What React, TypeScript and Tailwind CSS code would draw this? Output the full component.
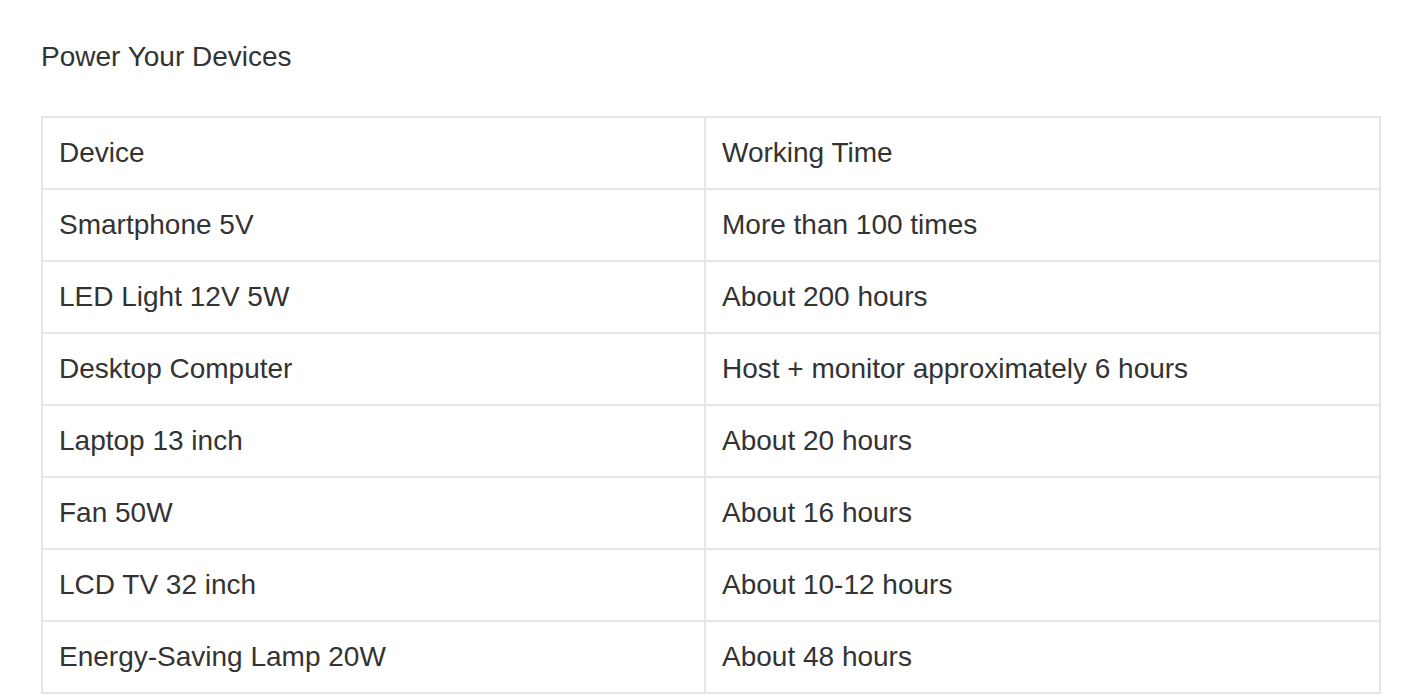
const rows: [string, string][] = [
  ["Device", "Working Time"],
  ["Smartphone 5V", "More than 100 times"],
  ["LED Light 12V 5W", "About 200 hours"],
  ["Desktop Computer", "Host + monitor approximately 6 hours"],
  ["Laptop 13 inch", "About 20 hours"],
  ["Fan 50W", "About 16 hours"],
  ["LCD TV 32 inch", "About 10-12 hours"],
  ["Energy-Saving Lamp 20W", "About 48 hours"],
];

export default function App() {
  return (
    <div
      className="min-h-[700px] bg-white pl-[41px] text-[#333333]"
      style={{ fontFamily: '"Liberation Sans", Arial, sans-serif' }}
    >
      <h2 className="pt-[37px] text-[28px] leading-[40px] font-normal">
        Power Your Devices
      </h2>

      {/* Device table */}
      <div className="mt-[39px] w-[1340px] border-2 border-[#e5e5e5]">
        {rows.map(([device, time], i) => (
          <div
            key={device}
            className={`grid grid-cols-[661px_1fr] ${i > 0 ? "border-t-2 border-[#e5e5e5]" : ""}`}
          >
            <div className="flex h-[70px] items-center px-4 text-[28px]">
              {device}
            </div>
            <div className="flex h-[70px] items-center border-l-2 border-[#e5e5e5] px-4 text-[28px]">
              {time}
            </div>
          </div>
        ))}
      </div>
    </div>
  );
}
